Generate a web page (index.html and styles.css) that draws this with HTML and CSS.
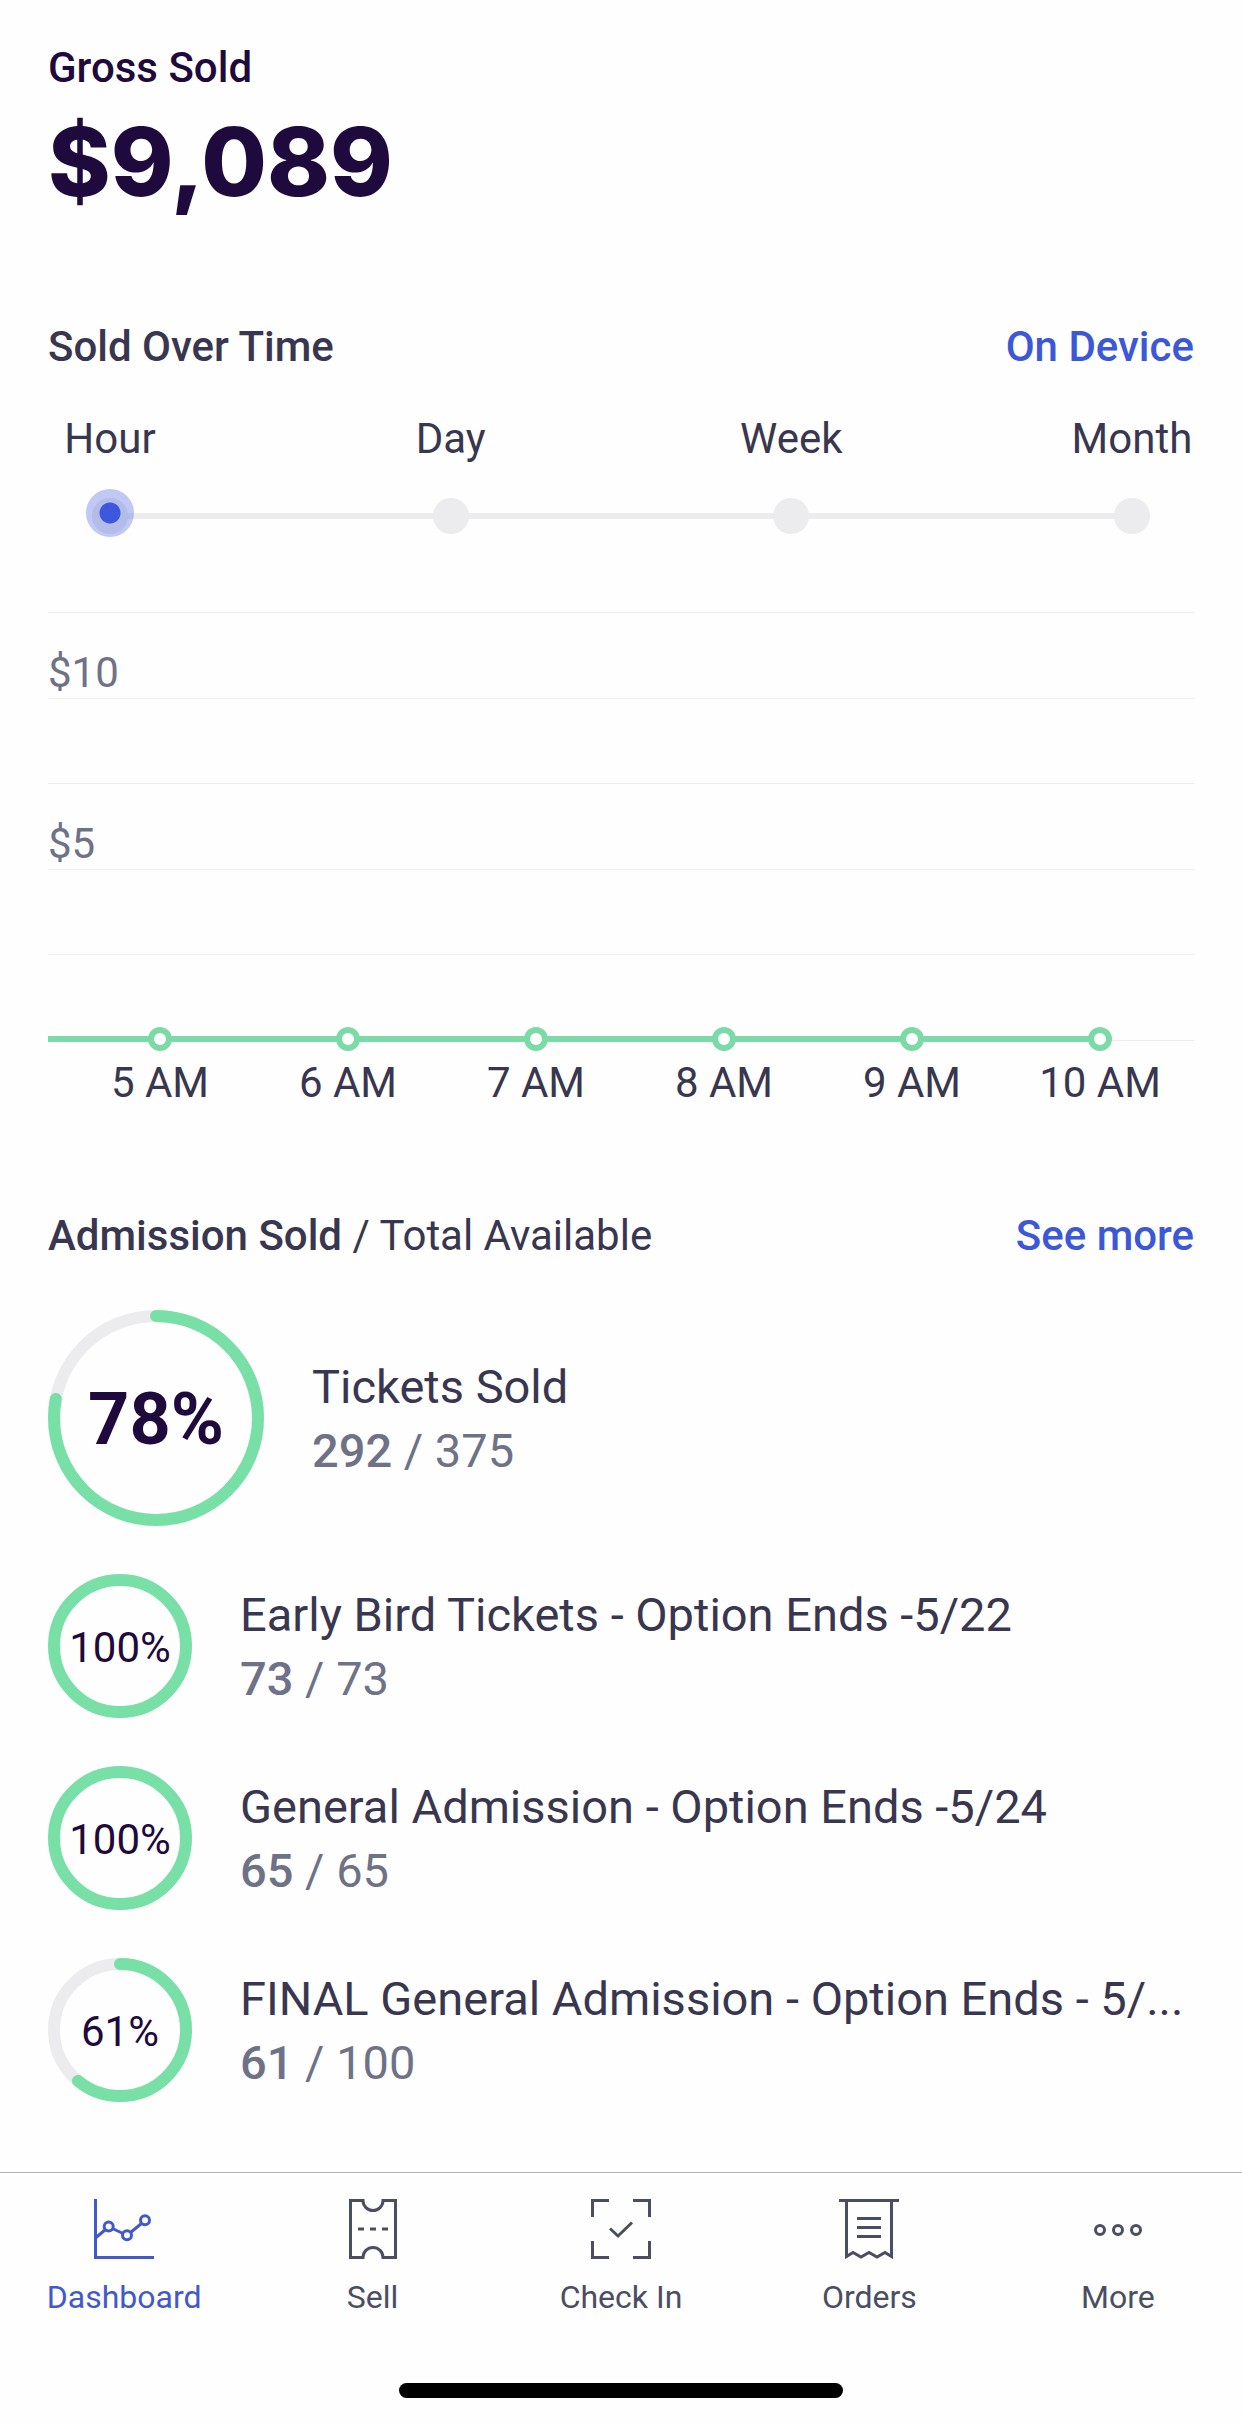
FILE: index.html
```html
<!DOCTYPE html>
<html lang="en">
<head>
    <meta charset="UTF-8">
    <meta name="viewport" content="width=device-width, initial-scale=1.0">
    <title>Dashboard</title>
    <link rel="stylesheet" href="styles.css">
</head>

<body>
    <main>
        <section class="gross">
            <h1>Gross Sold</h1>
            <p class="amount">$9,089</p>
        </section>

        <section class="over-time">
            <div class="section-head">
                <h2>Sold Over Time</h2>
                <a href="#device">On Device</a>
            </div>

            <div class="range" role="radiogroup" aria-label="Time range">
                <label>Hour <input type="radio" name="range" value="hour" checked></label>
                <label>Day <input type="radio" name="range" value="day"></label>
                <label>Week <input type="radio" name="range" value="week"></label>
                <label>Month <input type="radio" name="range" value="month"></label>
            </div>

            <div class="chart">
                <div class="grid-lines">
                    <div>$10</div>
                    <div></div>
                    <div>$5</div>
                    <div></div>
                    <div></div>
                </div>
                <ol class="points">
                    <li>5 AM</li>
                    <li>6 AM</li>
                    <li>7 AM</li>
                    <li>8 AM</li>
                    <li>9 AM</li>
                    <li>10 AM</li>
                </ol>
            </div>
        </section>

        <section class="admission">
            <div class="section-head">
                <h2>Admission Sold <span>/ Total Available</span></h2>
                <a href="#admission">See more</a>
            </div>

            <ul class="tickets">
                <li>
                    <div class="ring ring--large">
                        <svg viewBox="0 0 216 216">
                            <circle class="track" cx="108" cy="108" r="102"/>
                            <circle class="value" cx="108" cy="108" r="102" pathLength="100" stroke-dasharray="78 100" transform="rotate(-90 108 108)"/>
                        </svg>
                        <span>78%</span>
                    </div>
                    <div class="ticket">
                        <p class="name">Tickets Sold</p>
                        <p class="count"><b>292</b> / 375</p>
                    </div>
                </li>
                <li>
                    <div class="ring">
                        <svg viewBox="0 0 144 144">
                            <circle class="value" cx="72" cy="72" r="66"/>
                        </svg>
                        <span>100%</span>
                    </div>
                    <div class="ticket">
                        <p class="name">Early Bird Tickets - Option Ends -5/22</p>
                        <p class="count"><b>73</b> / 73</p>
                    </div>
                </li>
                <li>
                    <div class="ring">
                        <svg viewBox="0 0 144 144">
                            <circle class="value" cx="72" cy="72" r="66"/>
                        </svg>
                        <span>100%</span>
                    </div>
                    <div class="ticket">
                        <p class="name">General Admission - Option Ends -5/24</p>
                        <p class="count"><b>65</b> / 65</p>
                    </div>
                </li>
                <li>
                    <div class="ring">
                        <svg viewBox="0 0 144 144">
                            <circle class="track" cx="72" cy="72" r="66"/>
                            <circle class="value" cx="72" cy="72" r="66" pathLength="100" stroke-dasharray="61 100" transform="rotate(-90 72 72)"/>
                        </svg>
                        <span>61%</span>
                    </div>
                    <div class="ticket">
                        <p class="name">FINAL General Admission - Option Ends - 5/...</p>
                        <p class="count"><b>61</b> / 100</p>
                    </div>
                </li>
            </ul>
        </section>
    </main>

    <footer>
        <nav>
            <a href="#dashboard" class="active">
                <svg viewBox="0 0 60 60">
                    <path d="M1.5 0V58.5H60M2 38.5L11 31M18.5 29.5L29 34.5M36.5 33.5L47.5 24.5"/>
                    <circle cx="14.7" cy="27.5" r="4.5"/>
                    <circle cx="33" cy="36.3" r="4.5"/>
                    <circle cx="51" cy="21.3" r="4.5"/>
                </svg>
                Dashboard
            </a>
            <a href="#sell">
                <svg viewBox="0 0 60 60">
                    <path d="M7.5 1.5H20A10 10 0 0 0 40 1.5H52.5V58.5H40A10 10 0 0 0 20 58.5H7.5Z"/>
                    <path d="M15 30H21M27 30H33M39 30H45"/>
                </svg>
                Sell
            </a>
            <a href="#checkin">
                <svg viewBox="0 0 60 60">
                    <path d="M1.5 18V1.5H18M42 1.5H58.5V18M58.5 42V58.5H42M18 58.5H1.5V42"/>
                    <path d="M19 29.5L27 37L41 23.5"/>
                </svg>
                Check In
            </a>
            <a href="#orders">
                <svg viewBox="0 0 60 60">
                    <path d="M0 1.5H60M7.5 1.5V57.5L14 53.5L22 58L30 53.5L38 58L46 53.5L52.5 57.5V1.5"/>
                    <path d="M18 19.5H42M18 28.5H42M18 37.5H42"/>
                </svg>
                Orders
            </a>
            <a href="#more">
                <svg viewBox="0 0 60 60">
                    <circle cx="12" cy="31" r="4.5"/>
                    <circle cx="30" cy="31" r="4.5"/>
                    <circle cx="48" cy="31" r="4.5"/>
                </svg>
                More
            </a>
        </nav>
        <div class="home-bar"></div>
    </footer>
</body>
</html>
```
FILE: styles.css
```css
* {
    box-sizing: border-box;
    margin: 0;
    padding: 0;
}

body {
    display: flex;
    flex-direction: column;
    min-height: 100vh;
    background: #fefefe;
    color: #39364f;
    font-family: Roboto, "Liberation Sans", sans-serif;
    font-size: 42px;
    line-height: 48px;
}

a {
    text-decoration: none;
}

ul, ol {
    list-style: none;
}

main {
    flex: 1;
    padding: 44px 48px 48px;
}

h1, h2 {
    font-size: 42px;
    font-weight: 500;
}

h1 {
    color: #1e0a3c;
}

h2 span {
    font-weight: 400;
}

.amount {
    margin-top: 10px;
    color: #1e0a3c;
    font-family: Inter, Roboto, sans-serif;
    font-size: 95px;
    font-weight: 800;
    line-height: 120px;
}

.over-time {
    margin-top: 101px;
}

.section-head {
    display: flex;
    justify-content: space-between;
}

.section-head a {
    color: #3d58d6;
    font-weight: 500;
}

/* time range */
.range {
    position: relative;
    display: flex;
    justify-content: space-between;
    margin-top: 44px;
}

.range::before {
    content: "";
    position: absolute;
    right: 62px;
    bottom: 15px;
    left: 62px;
    height: 6px;
    background: #ececef;
}

.range label {
    display: flex;
    flex-direction: column;
    align-items: center;
    gap: 35px;
    width: 124px;
    cursor: pointer;
}

.range input {
    appearance: none;
    position: relative;
    width: 36px;
    height: 36px;
    border-radius: 50%;
    background: #ececef;
    cursor: pointer;
}

.range input:checked::after {
    content: "";
    position: absolute;
    top: -9px;
    left: -6px;
    width: 48px;
    height: 48px;
    border-radius: 50%;
    background: radial-gradient(circle, #3d58dc 10px, rgba(61, 88, 220, 0.32) 11px);
}

/* chart */
.chart {
    margin-top: 78px;
}

.grid-lines {
    display: grid;
    grid-template-rows: repeat(5, 1fr);
    height: 429px;
    border-bottom: 1px solid #eeeef0;
    color: #6f7287;
}

.grid-lines div {
    padding-top: 36px;
    border-top: 1px solid #eeeef0;
}

.points {
    position: relative;
    display: grid;
    grid-template-columns: repeat(6, 1fr);
    margin-top: -14px;
    padding-left: 18px;
    text-align: center;
}

.points::before {
    content: "";
    position: absolute;
    top: 9px;
    right: calc((100% - 18px) / 12);
    left: 0;
    height: 6px;
    background: #7adba6;
}

.points li::before {
    content: "";
    position: relative;
    display: block;
    width: 12px;
    height: 12px;
    margin: 0 auto 8px;
    border: 6px solid #7adba6;
    border-radius: 50%;
    background: #fff;
}

/* admission */
.admission {
    margin-top: 105px;
}

.tickets {
    display: flex;
    flex-direction: column;
    gap: 48px;
    margin-top: 50px;
}

.tickets li {
    display: flex;
    align-items: center;
    gap: 48px;
}

.ring {
    display: grid;
    flex: none;
    place-items: center;
    width: 144px;
    height: 144px;
    color: #1e0a3c;
}

.ring--large {
    width: 216px;
    height: 216px;
    font-size: 72px;
    font-weight: 700;
}

.ring svg, .ring span {
    grid-area: 1 / 1;
}

.ring span {
    padding-top: 4px;
}

.ring circle {
    fill: none;
    stroke-width: 12;
}

.ring .track {
    stroke: #ececef;
}

.ring .value {
    stroke: #78e0a6;
    stroke-linecap: round;
}

.ticket {
    min-width: 0;
    padding-top: 2px;
    font-size: 47px;
    line-height: 64px;
}

.name {
    overflow: hidden;
    white-space: nowrap;
    text-overflow: ellipsis;
}

.count {
    color: #6f7287;
}

.count b {
    font-weight: 500;
}

/* tab bar */
footer {
    padding-bottom: 24px;
    border-top: 1px solid #b2b2b6;
}

nav {
    display: grid;
    grid-template-columns: repeat(5, 1fr);
    padding-top: 26px;
}

nav a {
    display: flex;
    flex-direction: column;
    align-items: center;
    gap: 18px;
    color: #4b4d63;
    font-size: 32px;
    line-height: 40px;
}

nav .active {
    color: #4259cc;
}

nav svg {
    width: 60px;
    height: 60px;
    fill: none;
    stroke: currentColor;
    stroke-width: 3;
}

.home-bar {
    width: 444px;
    height: 15px;
    margin: 66px auto 0;
    border-radius: 8px;
    background: #000;
}
```
